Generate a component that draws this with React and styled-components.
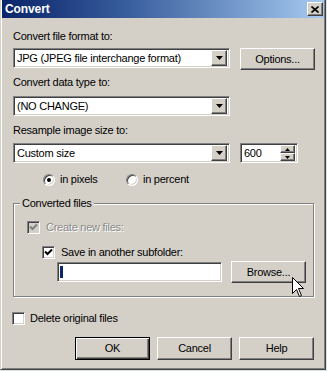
import React from "react";
import styled, { createGlobalStyle, css } from "styled-components";

const GlobalStyle = createGlobalStyle`
  html, body { margin: 0; padding: 0; background: #dde2ea; }
  * { box-sizing: border-box; }
`;

const font = css`
  font-family: "Liberation Sans", Arial, sans-serif;
  font-size: 11px;
  letter-spacing: -0.25px;
  line-height: 13px;
  color: #000;
`;

const raised = css`
  border: 1px solid;
  border-color: #fff #404040 #404040 #fff;
  box-shadow: inset -1px -1px 0 #808080, inset 1px 1px 0 #d4d0c8;
  background: #d4d0c8;
`;

const sunken = css`
  border: 1px solid;
  border-color: #808080 #fff #fff #808080;
  box-shadow: inset 1px 1px 0 #404040, inset -1px -1px 0 #d4d0c8;
`;

const Window = styled.div`
  position: relative;
  width: 326px;
  height: 370px;
  background: #d4d0c8;
  border-right: 1px solid #404040;
  border-bottom: 1px solid #404040;
  border-left: 1px solid #d4d0c8;
  box-shadow: inset 1px 0 0 #fff, inset -1px -1px 0 #808080;
  ${font}
`;

const TitleBar = styled.div`
  height: 18px;
  margin: 0 1px;
  display: flex;
  align-items: center;
  justify-content: space-between;
  padding: 0 1px 0 3px;
  background: linear-gradient(to right, #0a246a 0%, #3a5f9e 40%, #a6caf0 100%);
`;

const Title = styled.span`
  font-family: "Liberation Sans", Arial, sans-serif;
  font-weight: bold;
  font-size: 12px;
  letter-spacing: -0.1px;
  color: #fff;
`;

const CloseButton = styled.div`
  ${raised}
  width: 16px;
  height: 14px;
  display: flex;
  align-items: center;
  justify-content: center;
`;

const Body = styled.div`
  padding: 12px 0 0 12px;
`;

const Label = styled.div`
  height: 13px;
  margin-top: ${(p) => p.$mt || 0}px;
  white-space: nowrap;
`;

const FieldRow = styled.div`
  display: flex;
  align-items: flex-start;
  gap: 10px;
  margin-top: ${(p) => p.$mt || 0}px;
`;

const ComboBox = styled.div`
  ${sunken}
  width: 217px;
  height: 20px;
  background: #fff;
  display: flex;
  align-items: center;
  padding: 2px;
`;

const ComboText = styled.span`
  flex: 1;
  padding-left: 1px;
  white-space: nowrap;
  overflow: hidden;
`;

const DropButton = styled.div`
  ${raised}
  width: 16px;
  height: 16px;
  display: flex;
  align-items: center;
  justify-content: center;
`;

const Button = styled.div`
  ${raised}
  width: ${(p) => p.$w || 75}px;
  height: ${(p) => p.$h || 22}px;
  display: flex;
  align-items: center;
  justify-content: center;
  white-space: nowrap;
  ${(p) =>
    p.$default &&
    css`
      border: 1px solid #000;
      box-shadow: inset 1px 1px 0 #fff, inset -1px -1px 0 #404040,
        inset -2px -2px 0 #808080;
    `}
`;

const SpinBox = styled.div`
  ${sunken}
  width: 58px;
  height: 20px;
  background: #fff;
  display: flex;
  align-items: center;
  padding: 2px;
`;

const SpinText = styled.span`
  flex: 1;
  padding-left: 1px;
`;

const SpinButtons = styled.div`
  display: flex;
  flex-direction: column;
  width: 15px;
  height: 16px;
`;

const SpinBtn = styled.div`
  ${raised}
  height: 8px;
  display: flex;
  align-items: center;
  justify-content: center;
`;

const RadioRow = styled.div`
  display: flex;
  align-items: center;
  height: 13px;
  margin-top: 10px;
  padding-left: 30px;
`;

const RadioItem = styled.div`
  display: flex;
  align-items: center;
  gap: 5px;
  width: ${(p) => (p.$w ? `${p.$w}px` : "auto")};
`;

const Radio = styled.span`
  position: relative;
  width: 12px;
  height: 12px;
  border-radius: 50%;
  background: #fff;
  border: 1px solid;
  border-color: #808080 #fff #fff #808080;
  box-shadow: inset 1px 1px 0 #404040, inset -1px -1px 0 #d4d0c8;
  ${(p) =>
    p.$checked &&
    css`
      &::after {
        content: "";
        position: absolute;
        left: 3px;
        top: 3px;
        width: 4px;
        height: 4px;
        border-radius: 50%;
        background: #000;
      }
    `}
`;

const Group = styled.fieldset`
  width: 301px;
  margin: 11px 0 0 0;
  padding: 0 0 13px 0;
  min-width: 0;
  border: 1px solid #808080;
  box-shadow: 1px 1px 0 #fff, inset 1px 1px 0 #fff;
`;

const Legend = styled.legend`
  margin-left: 6px;
  padding: 0 2px;
  height: 13px;
  background: #d4d0c8;
`;

const CheckRow = styled.div`
  display: flex;
  align-items: center;
  gap: ${(p) => p.$gap || 6}px;
  height: 13px;
  margin-top: ${(p) => p.$mt || 0}px;
  margin-left: ${(p) => p.$indent || 0}px;
  color: ${(p) => (p.$disabled ? "#8a8a8a" : "#000")};
  text-shadow: ${(p) => (p.$disabled ? "1px 1px 0 #fff" : "none")};
`;

const CheckBox = styled.span`
  ${sunken}
  width: 13px;
  height: 13px;
  background: ${(p) => (p.$disabled ? "#d4d0c8" : "#fff")};
  display: flex;
  align-items: center;
  justify-content: center;
`;

const EditRow = styled.div`
  display: flex;
  align-items: center;
  gap: 9px;
  margin-top: 2px;
  margin-left: 43px;
`;

const EditBox = styled.div`
  ${sunken}
  width: 165px;
  height: 20px;
  background: #fff;
  padding: 3px 2px;
  display: flex;
  align-items: stretch;
`;

const Selection = styled.span`
  width: 3px;
  background: #0a246a;
`;

const ButtonRow = styled.div`
  display: flex;
  gap: 7px;
  margin-top: 12px;
  padding-left: 62px;
`;

const Cursor = styled.svg`
  position: absolute;
  left: 291px;
  top: 277px;
`;

const Check = ({ color = "#000" }) => (
  <svg width="9" height="9" viewBox="0 0 9 9">
    <path d="M1 3.5 L3.5 6 L8 1.5" fill="none" stroke={color} strokeWidth="2" />
  </svg>
);

const Triangle = ({ w = 7, h = 4, up }) => (
  <svg width={w} height={h} viewBox={`0 0 ${w} ${h}`}>
    <path
      d={up ? `M0 ${h} L${w / 2} 0 L${w} ${h} Z` : `M0 0 L${w} 0 L${w / 2} ${h} Z`}
      fill="#000"
    />
  </svg>
);

const Combo = ({ value }) => (
  <ComboBox>
    <ComboText>{value}</ComboText>
    <DropButton>
      <Triangle />
    </DropButton>
  </ComboBox>
);

export default function App() {
  return (
    <>
      <GlobalStyle />
      <Window>
        <TitleBar>
          <Title>Convert</Title>
          <CloseButton>
            <svg width="8" height="7" viewBox="0 0 8 7">
              <path d="M0.5 0.5 L7.5 6.5 M7.5 0.5 L0.5 6.5" stroke="#000" strokeWidth="1.6" />
            </svg>
          </CloseButton>
        </TitleBar>
        <Body>
          <Label>Convert file format to:</Label>
          <FieldRow $mt={5}>
            <Combo value="JPG (JPEG file interchange format)" />
            <Button>Options...</Button>
          </FieldRow>
          <Label $mt={6}>Convert data type to:</Label>
          <FieldRow $mt={7}>
            <Combo value="(NO CHANGE)" />
          </FieldRow>
          <Label $mt={8}>Resample image size to:</Label>
          <FieldRow $mt={6}>
            <Combo value="Custom size" />
            <SpinBox>
              <SpinText>600</SpinText>
              <SpinButtons>
                <SpinBtn>
                  <Triangle w={5} h={3} up />
                </SpinBtn>
                <SpinBtn>
                  <Triangle w={5} h={3} />
                </SpinBtn>
              </SpinButtons>
            </SpinBox>
          </FieldRow>
          <RadioRow>
            <RadioItem $w={83}>
              <Radio $checked />
              <span>in pixels</span>
            </RadioItem>
            <RadioItem>
              <Radio />
              <span>in percent</span>
            </RadioItem>
          </RadioRow>
          <Group>
            <Legend>Converted files</Legend>
            <CheckRow $mt={11} $indent={13} $disabled>
              <CheckBox $disabled>
                <Check color="#808080" />
              </CheckBox>
              <span>Create new files:</span>
            </CheckRow>
            <CheckRow $mt={12} $indent={28}>
              <CheckBox>
                <Check />
              </CheckBox>
              <span>Save in another subfolder:</span>
            </CheckRow>
            <EditRow>
              <EditBox>
                <Selection />
              </EditBox>
              <Button>Browse...</Button>
            </EditRow>
          </Group>
          <CheckRow $mt={15} $indent={-1} $gap={5}>
            <CheckBox />
            <span>Delete original files</span>
          </CheckRow>
          <ButtonRow>
            <Button $default $h={23}>OK</Button>
            <Button $h={23}>Cancel</Button>
            <Button $h={23}>Help</Button>
          </ButtonRow>
        </Body>
        <Cursor width="13" height="21" viewBox="0 0 13 21">
          <path
            d="M0.5 0.5 L0.5 16.5 L4.5 12.5 L7.5 19.5 L9.5 18.5 L6.5 11.5 L11.5 11.5 Z"
            fill="#fff"
            stroke="#000"
            strokeWidth="1"
          />
        </Cursor>
      </Window>
    </>
  );
}
